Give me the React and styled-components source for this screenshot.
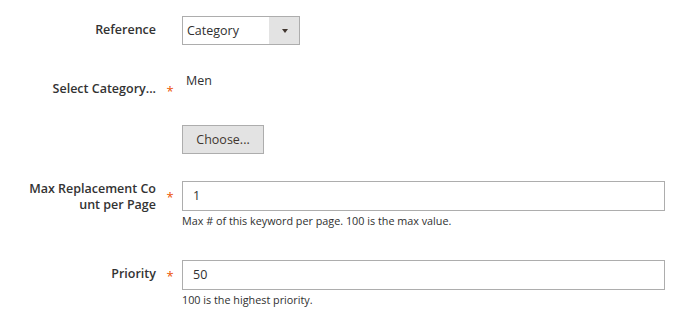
import styled, { createGlobalStyle } from "styled-components";

const GlobalStyle = createGlobalStyle`
  body {
    margin: 0;
    background: #ffffff;
    font-family: "Open Sans", "Liberation Sans", sans-serif;
    color: #303030;
  }
`;

const fields = [
  { label: "Max Replacement Count per Page", value: "1", note: "Max # of this keyword per page. 100 is the max value.", top: 27, pad: 0 },
  { label: "Priority", value: "50", note: "100 is the highest priority.", top: 32, pad: 6 },
];

export default function App() {
  return (
    <>
      <GlobalStyle />
      <Form>
        <Row $top={16}>
          <Label $pad={6}>Reference</Label>
          <Required />
          <Select>
            <SelectText>Category</SelectText>
            <SelectArrow>
              <Triangle />
            </SelectArrow>
          </Select>
        </Row>

        <Row $top={28}>
          <Label $pad={8}>Select Category...</Label>
          <Required $pad={6}>*</Required>
          <PlainValue>Men</PlainValue>
        </Row>

        <Row $top={26}>
          <Label />
          <Required />
          <div>
            <Button>Choose...</Button>
          </div>
        </Row>

        {fields.map((f) => (
          <Row key={f.label} $top={f.top}>
            <Label $pad={f.pad}>{f.label}</Label>
            <Required $pad={4}>*</Required>
            <Control>
              <Input>{f.value}</Input>
              <Note>{f.note}</Note>
            </Control>
          </Row>
        ))}
      </Form>
    </>
  );
}

const Form = styled.div`
  display: flex;
  flex-direction: column;
  padding-right: 35px;
`;

const Row = styled.div`
  display: grid;
  grid-template-columns: 156px 26px 1fr;
  align-items: start;
  margin-top: ${(p) => p.$top}px;
`;

const Label = styled.div`
  text-align: right;
  font-size: 12.5px;
  font-weight: 600;
  line-height: 16px;
  padding-top: ${(p) => p.$pad || 0}px;
  padding-left: 28px;
  color: #333333;
  word-break: break-all;
`;

const Required = styled.div`
  text-align: center;
  color: #eb5202;
  font-size: 13px;
  line-height: 16px;
  height: 16px;
  padding-top: ${(p) => (p.$pad || 0) + 4}px;
  padding-left: 2px;
`;

const Select = styled.div`
  display: flex;
  width: 118px;
  height: 29px;
  box-sizing: border-box;
  border: 1px solid #adadad;
  background: #ffffff;
`;

const SelectText = styled.div`
  flex: 1;
  padding-left: 4px;
  font-size: 12.5px;
  line-height: 27px;
`;

const SelectArrow = styled.div`
  width: 30px;
  background: #e3e3e3;
  display: flex;
  align-items: center;
  justify-content: center;
`;

const Triangle = styled.span`
  width: 0;
  height: 0;
  border-left: 3.5px solid transparent;
  border-right: 3.5px solid transparent;
  border-top: 4px solid #41362f;
  margin-left: 1px;
`;

const PlainValue = styled.div`
  font-size: 12.5px;
  line-height: 16px;
  padding-left: 4px;
`;

const Button = styled.div`
  display: inline-flex;
  align-items: center;
  justify-content: center;
  width: 82px;
  height: 29px;
  box-sizing: border-box;
  border: 1px solid #adadad;
  background: #e3e3e3;
  font-size: 12.5px;
  color: #41362f;
`;

const Control = styled.div`
  display: flex;
  flex-direction: column;
`;

const Input = styled.div`
  height: 30px;
  box-sizing: border-box;
  border: 1px solid #adadad;
  padding-left: 10px;
  font-size: 12.5px;
  line-height: 28px;
  background: #ffffff;
`;

const Note = styled.div`
  font-size: 10.8px;
  line-height: 14px;
  margin-top: 3px;
  color: #303030;
`;
